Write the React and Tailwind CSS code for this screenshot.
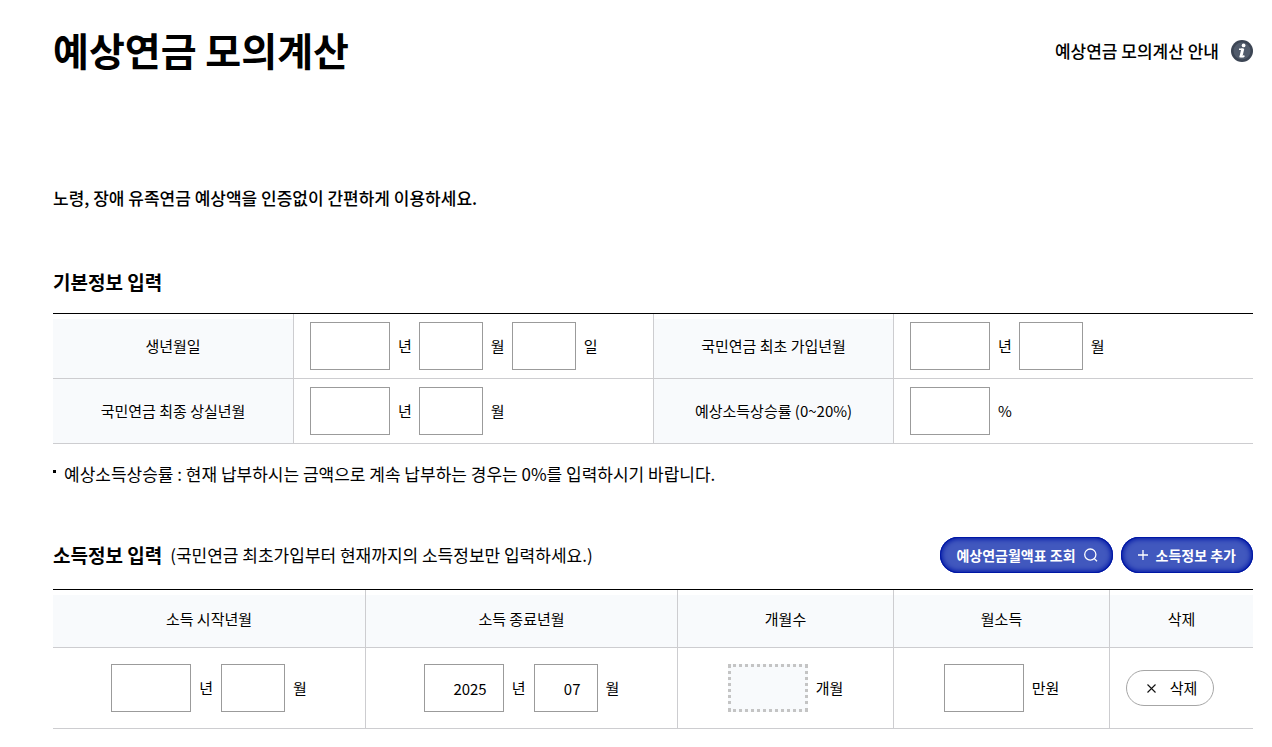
import { useState } from "react";

const headText = "font-normal [text-shadow:0_0_3px_#fff,0_0_3px_#fff,0_0_4px_#fff]";

function Field({ label, unit, short, value = "" }) {
  const [text, setText] = useState(value);

  return (
    <label className="flex items-center gap-2">
      <input
        type="text"
        aria-label={label}
        value={text}
        onChange={(e) => setText(e.target.value)}
        className={
          short
            ? "w-16 h-12 px-4 text-right bg-white border border-[#9b9b9b] focus:outline-none focus:border-[#0017a5]"
            : "w-20 h-12 px-4 text-right bg-white border border-[#9b9b9b] focus:outline-none focus:border-[#0017a5]"
        }
      />
      <span>{unit}</span>
    </label>
  );
}

function RowHead({ children, first, top }) {
  return (
    <th
      scope="row"
      className={`bg-[#f8fafc] border-b border-[#cdcdd0] ${headText} ${first ? "" : "border-l"} ${top ? "shadow-[inset_0_5px_0_#fff]" : ""}`}
    >
      {children}
    </th>
  );
}

function RowCell({ children }) {
  return (
    <td className="border-l border-b border-[#cdcdd0] px-4 py-2">
      <div className="flex items-center gap-[7px]">{children}</div>
    </td>
  );
}

function ColHead({ children, first }) {
  return (
    <th
      scope="col"
      className={`h-[58px] bg-[#f8fafc] border-b border-[#cdcdd0] shadow-[inset_0_5px_0_#fff] ${headText} ${first ? "" : "border-l"}`}
    >
      {children}
    </th>
  );
}

function ColCell({ children, first }) {
  return (
    <td className={`border-b border-[#cdcdd0] py-4 ${first ? "" : "border-l"}`}>
      <div className="flex items-center justify-center gap-2">{children}</div>
    </td>
  );
}

function InfoIcon() {
  return (
    <svg width="22" height="22" viewBox="0 0 22 22" aria-hidden="true">
      <circle cx="11" cy="11" r="11" fill="#3c4554" />
      <circle cx="11" cy="11" r="8.5" fill="#515b6b" />
      <circle cx="12.6" cy="5.4" r="1.9" fill="#fff" />
      <path d="M8 9.3h4.6M8.6 16.6h3.6l1.2-1" fill="none" stroke="#fff" strokeWidth="1.6" />
      <path d="M11.8 8.6L9.9 17" fill="none" stroke="#fff" strokeWidth="2.9" />
    </svg>
  );
}

function SearchIcon() {
  return (
    <svg width="14" height="14" viewBox="0 0 14 14" fill="none" stroke="#fff" strokeWidth="1.3" aria-hidden="true">
      <circle cx="6.3" cy="6.6" r="5.6" />
      <path d="M10.3 10.6L13 13.3" />
    </svg>
  );
}

function PlusIcon() {
  return (
    <svg width="10" height="10" viewBox="0 0 10 10" stroke="#fff" strokeWidth="1.3" aria-hidden="true">
      <path d="M5 0v10M0 5h10" />
    </svg>
  );
}

function CloseIcon() {
  return (
    <svg width="9" height="9" viewBox="0 0 9 9" stroke="#111" strokeWidth="1.1" aria-hidden="true">
      <path d="M0.5 0.5l8 8M8.5 0.5l-8 8" />
    </svg>
  );
}

export default function App() {
  return (
    <main className="min-h-screen bg-white pl-[53px] pr-[19px] pt-6 pb-4 text-[15px] leading-6 text-black font-['Noto_Sans_CJK_KR',sans-serif]">
      {/* Title */}
      <header className="flex items-center justify-between">
        <h1 className="text-[39px] leading-[50px] font-bold">예상연금 모의계산</h1>
        <a href="#guide" className="mt-1 flex items-center gap-3 text-[17px] font-medium">
          예상연금 모의계산 안내
          <InfoIcon />
        </a>
      </header>

      <p className="mt-[110px] text-[17px] leading-7 font-medium">
        노령, 장애 유족연금 예상액을 인증없이 간편하게 이용하세요.
      </p>

      {/* Basic info */}
      <section className="mt-14">
        <h2 className="text-[19px] leading-7 font-bold">기본정보 입력</h2>
        <table className="mt-[17px] w-full table-fixed border-separate border-spacing-0 border-t border-black">
          <colgroup>
            <col className="w-[20%]" />
            <col className="w-[30%]" />
            <col className="w-[20%]" />
            <col className="w-[30%]" />
          </colgroup>
          <tbody>
            <tr>
              <RowHead first top>생년월일</RowHead>
              <RowCell>
                <Field label="생년" unit="년" />
                <Field label="생월" unit="월" short />
                <Field label="생일" unit="일" short />
              </RowCell>
              <RowHead top>국민연금 최초 가입년월</RowHead>
              <RowCell>
                <Field label="최초 가입년" unit="년" />
                <Field label="최초 가입월" unit="월" short />
              </RowCell>
            </tr>
            <tr>
              <RowHead first>국민연금 최종 상실년월</RowHead>
              <RowCell>
                <Field label="최종 상실년" unit="년" />
                <Field label="최종 상실월" unit="월" short />
              </RowCell>
              <RowHead>예상소득상승률 (0~20%)</RowHead>
              <RowCell>
                <Field label="예상소득상승률" unit="%" />
              </RowCell>
            </tr>
          </tbody>
        </table>
        <ul className="mt-4">
          <li className="flex gap-2 text-[17px] leading-7">
            <span className="mt-[10px] w-[3px] h-[3px] shrink-0 bg-black" />
            예상소득상승률 : 현재 납부하시는 금액으로 계속 납부하는 경우는 0%를 입력하시기 바랍니다.
          </li>
        </ul>
      </section>

      {/* Income info */}
      <section className="mt-[49px]">
        <div className="flex items-center justify-between">
          <div className="flex items-center gap-2">
            <h2 className="text-[19px] leading-7 font-bold">소득정보 입력</h2>
            <span className="text-[17px] leading-7">
              (국민연금 최초가입부터 현재까지의 소득정보만 입력하세요.)
            </span>
          </div>
          <div className="flex gap-2">
            <button
              type="button"
              className="flex items-center gap-2 h-9 pl-4 pr-[15px] rounded-full bg-[#4158be] text-white text-[14px] font-bold shadow-[inset_0_0_0_1px_#0017a5,inset_0_0_5px_2px_#0017a5]"
            >
              예상연금월액표 조회
              <SearchIcon />
            </button>
            <button
              type="button"
              className="flex items-center gap-2 h-9 px-[17px] rounded-full bg-[#4158be] text-white text-[14px] font-bold shadow-[inset_0_0_0_1px_#0017a5,inset_0_0_5px_2px_#0017a5]"
            >
              <PlusIcon />
              소득정보 추가
            </button>
          </div>
        </div>
        <table className="mt-4 w-full table-fixed border-separate border-spacing-0 border-t border-black">
          <colgroup>
            <col className="w-[26%]" />
            <col className="w-[26%]" />
            <col className="w-[18%]" />
            <col className="w-[18%]" />
            <col className="w-[12%]" />
          </colgroup>
          <thead>
            <tr>
              <ColHead first>소득 시작년월</ColHead>
              <ColHead>소득 종료년월</ColHead>
              <ColHead>개월수</ColHead>
              <ColHead>월소득</ColHead>
              <ColHead>삭제</ColHead>
            </tr>
          </thead>
          <tbody>
            <tr>
              <ColCell first>
                <Field label="소득 시작년" unit="년" />
                <Field label="소득 시작월" unit="월" short />
              </ColCell>
              <ColCell>
                <Field label="소득 종료년" unit="년" value="2025" />
                <Field label="소득 종료월" unit="월" value="07" short />
              </ColCell>
              <ColCell>
                <label className="flex items-center gap-2">
                  <input
                    type="text"
                    aria-label="개월수"
                    disabled
                    className="w-20 h-12 px-3 text-right bg-[#f8fafc] border-3 border-dotted border-[#c4c4c4]"
                  />
                  <span>개월</span>
                </label>
              </ColCell>
              <ColCell>
                <Field label="월소득" unit="만원" />
              </ColCell>
              <td className="border-l border-b border-[#cdcdd0] px-4 py-4">
                <button
                  type="button"
                  className="flex items-center justify-center gap-[14px] h-9 w-[88px] pl-1 rounded-full border border-[#a6a6a6] bg-white"
                >
                  <CloseIcon />
                  삭제
                </button>
              </td>
            </tr>
          </tbody>
        </table>
      </section>
    </main>
  );
}
